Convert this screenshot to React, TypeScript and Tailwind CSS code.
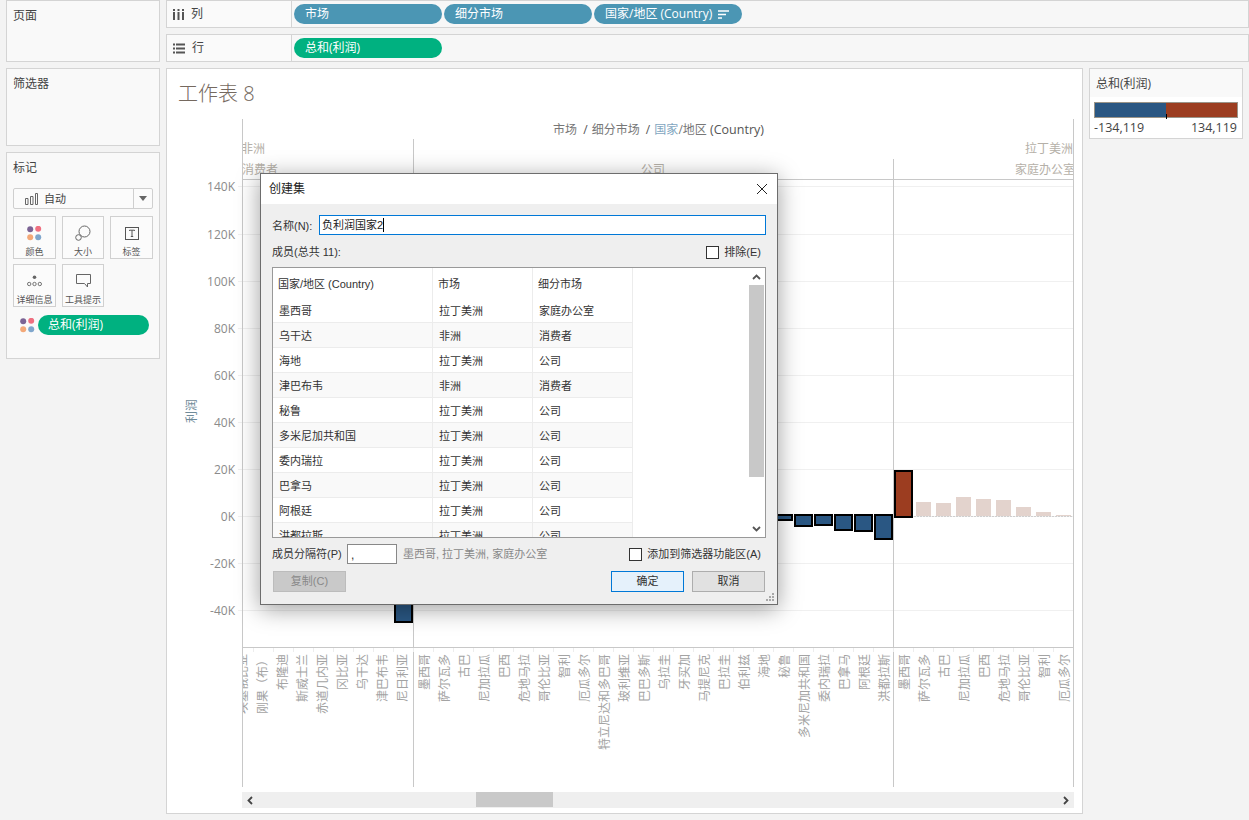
import { ReactNode } from "react";

// Country labels per pane, left to right
const AFRICA = ["埃塞俄比亚", "刚果（布）", "布隆迪", "斯威士兰", "赤道几内亚", "冈比亚", "乌干达", "津巴布韦", "尼日利亚"];
const CORP = ["墨西哥", "萨尔瓦多", "古巴", "尼加拉瓜", "巴西", "危地马拉", "哥伦比亚", "智利", "厄瓜多尔", "特立尼达和多巴哥", "玻利维亚", "巴巴多斯", "乌拉圭", "牙买加", "马提尼克", "巴拉圭", "伯利兹", "海地", "秘鲁", "多米尼加共和国", "委内瑞拉", "巴拿马", "阿根廷", "洪都拉斯"];
const HOME = ["墨西哥", "萨尔瓦多", "古巴", "尼加拉瓜", "巴西", "危地马拉", "哥伦比亚", "智利", "厄瓜多尔"];

const TICKS = [
  { y: 186, label: "140K" },
  { y: 234, label: "120K" },
  { y: 281, label: "100K" },
  { y: 328, label: "80K" },
  { y: 375, label: "60K" },
  { y: 422, label: "40K" },
  { y: 469, label: "20K" },
  { y: 516, label: "0K" },
  { y: 563, label: "-20K" },
  { y: 610, label: "-40K" },
];

// Selected bars: x, top, bottom
const SELECTED_NEG = [
  [395, 515, 622],
  [775, 515, 520],
  [795, 515, 526],
  [815, 515, 525],
  [835, 515, 530],
  [855, 515, 531],
  [875, 515, 539],
];
const FADED_TOPS = [502, 503, 497, 499, 500, 507, 512, 515];

const MEMBERS = [
  ["墨西哥", "拉丁美洲", "家庭办公室"],
  ["乌干达", "非洲", "消费者"],
  ["海地", "拉丁美洲", "公司"],
  ["津巴布韦", "非洲", "消费者"],
  ["秘鲁", "拉丁美洲", "公司"],
  ["多米尼加共和国", "拉丁美洲", "公司"],
  ["委内瑞拉", "拉丁美洲", "公司"],
  ["巴拿马", "拉丁美洲", "公司"],
  ["阿根廷", "拉丁美洲", "公司"],
  ["洪都拉斯", "拉丁美洲", "公司"],
];

function Dots() {
  return (
    <svg width="15" height="15" viewBox="0 0 15 15">
      <circle cx="3.2" cy="3.2" r="3" fill="#7b6394" />
      <circle cx="11.2" cy="2.8" r="3" fill="#ef6f80" />
      <circle cx="3.2" cy="11.2" r="3" fill="#f3a878" />
      <circle cx="11.2" cy="11.2" r="3" fill="#7fa6cc" />
    </svg>
  );
}

function Pill({ color, children }: { color: string; children: ReactNode }) {
  return <div className={`h-5 w-[148px] rounded-full flex items-center pl-[11px] text-white text-xs ${color}`}>{children}</div>;
}

function Shelf({ icon, label, children }: { icon: ReactNode; label: string; children: ReactNode }) {
  return (
    <div className="h-[28px] border border-[#d4d4d4] flex bg-[#f7f7f7]">
      <div className="w-[125px] flex items-center gap-[7px] pl-[6px] text-xs text-[#444] bg-[#fafafa] border-r border-[#d4d4d4]">
        {icon}
        <span>{label}</span>
      </div>
      <div className="flex items-center gap-[2px] pl-[2px]">{children}</div>
    </div>
  );
}

function MarkButton({ icon, label, narrow }: { icon: ReactNode; label: string; narrow?: boolean }) {
  return (
    <div className={`h-[43px] border border-[#d0d0d0] bg-[#fbfbfb] flex flex-col items-center pt-[6px] text-[9px] leading-[12px] text-[#555] ${narrow ? "w-[42px]" : "w-[43px]"}`}>
      <div className="h-[20px] flex items-center justify-center">{icon}</div>
      <span className="mt-[3px] whitespace-nowrap">{label}</span>
    </div>
  );
}

function Chart() {
  return (
    <svg viewBox="167 115 915 675" width="915" height="675" className="block">
      <defs>
        <clipPath id="pane">
          <rect x="243" y="115" width="830" height="675" />
        </clipPath>
      </defs>

      {/* grid lines */}
      {TICKS.map((t) => (
        <g key={t.y}>
          <line x1="238" x2="1073" y1={t.y + 0.5} y2={t.y + 0.5} stroke="#f0f0f0" />
          <text x="235" y={t.y + 5} textAnchor="end" fontSize="12" fill="#8b8b8b">
            {t.label}
          </text>
        </g>
      ))}

      {/* pane dividers */}
      <line x1="242.5" x2="242.5" y1="119" y2="787" stroke="#c8c8c8" />
      <line x1="413.5" x2="413.5" y1="139" y2="787" stroke="#c8c8c8" />
      <line x1="893.5" x2="893.5" y1="159" y2="787" stroke="#c8c8c8" />
      <line x1="1073.5" x2="1073.5" y1="119" y2="787" stroke="#c8c8c8" />
      <line x1="243" x2="1073" y1="179.5" y2="179.5" stroke="#c8c8c8" />
      <line x1="243" x2="1073" y1="647.5" y2="647.5" stroke="#c8c8c8" />

      {/* headers */}
      <text x="658.5" y="134" textAnchor="middle" fontSize="12" fill="#555">
        <tspan fill="#777">市场</tspan>
        <tspan dx="3"> / </tspan>
        <tspan dx="1" fill="#777">细分市场</tspan>
        <tspan dx="3"> / </tspan>
        <tspan dx="1" fill="#7fa6c0">国家</tspan>
        <tspan fill="#777">/地区</tspan>
        <tspan fontSize="12.5"> (Country)</tspan>
      </text>
      <g clipPath="url(#pane)" fontSize="12" fill="#b5b0a8">
        <text x="241" y="153">非洲</text>
        <text x="242" y="174">消费者</text>
        <text x="653" y="174" textAnchor="middle">公司</text>
        <text x="1073" y="153" textAnchor="end">拉丁美洲</text>
        <text x="1075" y="174" textAnchor="end">家庭办公室</text>
      </g>

      {/* axis title */}
      <text transform="translate(196 411) rotate(-90)" textAnchor="middle" fontSize="12" fill="#6f8b9a">
        利润
      </text>

      {/* ticks under the axis */}
      {Array.from({ length: 41 }, (_, i) => (
        <line key={i} x1={253.5 + i * 20} x2={253.5 + i * 20} y1="648" y2="652" stroke="#ededed" />
      ))}

      {/* country labels */}
      <g clipPath="url(#pane)" fontSize="12" fill="#a3a3a3">
        {AFRICA.map((n, i) => (
          <text key={n} transform={`translate(${247 + i * 20} 654) rotate(-90)`} textAnchor="end">
            {n}
          </text>
        ))}
        {CORP.map((n, i) => (
          <text key={n} transform={`translate(${429 + i * 20} 654) rotate(-90)`} textAnchor="end">
            {n}
          </text>
        ))}
        {HOME.map((n, i) => (
          <text key={n} transform={`translate(${909 + i * 20} 654) rotate(-90)`} textAnchor="end">
            {n}
          </text>
        ))}
      </g>

      {/* bars */}
      {SELECTED_NEG.map(([x, top, bottom]) => (
        <rect key={x} x={x} y={top} width="17" height={bottom - top} fill="#2a5783" stroke="#000" strokeWidth="2" />
      ))}
      <rect x="895" y="471" width="17" height="46" fill="#9c3d20" stroke="#000" strokeWidth="2" />
      {FADED_TOPS.map((top, i) => (
        <rect key={i} x={916 + i * 20} y={top} width="15" height={516 - top} fill="#e3d3cd" />
      ))}
      <line x1="914" x2="1072" y1="516.5" y2="516.5" stroke="#cfcfcf" strokeDasharray="2 1" />
    </svg>
  );
}

function Dialog() {
  return (
    <div className="absolute left-[260px] top-[173px] w-[518px] h-[432px] bg-[#efefef] border border-[#6d6d6d] shadow-[0_4px_22px_rgba(0,0,0,0.38)] flex flex-col text-[11px] text-[#333] [font-family:'Liberation_Sans','Noto_Sans_CJK_SC',sans-serif]">
      <div className="h-[30px] shrink-0 bg-white flex items-center justify-between pl-[8px] pr-[9px] text-xs text-[#222]">
        <span>创建集</span>
        <svg width="12" height="12" viewBox="0 0 12 12" stroke="#222" strokeWidth="1">
          <path d="M1 1l10 10M11 1L1 11" />
        </svg>
      </div>

      <div className="flex-1 flex flex-col px-[11px] relative">
        <div className="flex items-center mt-[11px]">
          <span className="whitespace-nowrap pt-[2px]">名称(N):</span>
          <div className="ml-auto h-[20px] w-[447px] border border-[#0078d7] bg-white flex items-center pl-[2px] text-[11px] text-[#222]">
            负利润国家2<span className="w-px h-[14px] bg-black" />
          </div>
        </div>
        <div className="flex items-center justify-between mt-[10px] h-[14px] pr-[5px]">
          <span>成员(总共 11):</span>
          <div className="flex items-center gap-[5px]">
            <span className="w-[13px] h-[13px] border border-[#333] bg-white" />
            <span>排除(E)</span>
          </div>
        </div>

        <div className="mt-[8px] w-[494px] h-[271px] border border-[#999] bg-white flex overflow-hidden">
          <div className="w-[360px] shrink-0">
            <div className="flex h-[30px] items-center">
              <div className="w-[160px] h-full flex items-center pl-[5px] pt-[2px] border-r border-[#ececec]">国家/地区 (Country)</div>
              <div className="w-[100px] h-full flex items-center pl-[5px] pt-[2px] border-r border-[#ececec]">市场</div>
              <div className="w-[100px] h-full flex items-center pl-[5px] pt-[2px] border-r border-[#ececec]">细分市场</div>
            </div>
            {MEMBERS.map((m, i) => (
              <div key={m[0]} className={`flex h-[25px] items-center border-b border-[#ececec] ${i % 2 === 1 ? "bg-[#f9f9f9]" : "bg-white"}`}>
                <div className="w-[160px] h-full flex items-center pl-[6px] pt-[2px] border-r border-[#ececec]">{m[0]}</div>
                <div className="w-[100px] h-full flex items-center pl-[6px] pt-[2px] border-r border-[#ececec]">{m[1]}</div>
                <div className="w-[100px] h-full flex items-center pl-[6px] pt-[2px] border-r border-[#ececec]">{m[2]}</div>
              </div>
            ))}
          </div>
          <div className="flex-1" />
          <div className="w-[16px] flex flex-col bg-white items-start">
            <div className="w-[15px] h-[17px] flex items-center justify-center">
              <svg width="9" height="6" viewBox="0 0 9 6" fill="none" stroke="#555" strokeWidth="1.8">
                <path d="M1 5l3.5-3.5L8 5" />
              </svg>
            </div>
            <div className="w-[15px] h-[192px] bg-[#c8c8c8]" />
            <div className="flex-1" />
            <div className="w-[15px] h-[17px] flex items-center justify-center">
              <svg width="9" height="6" viewBox="0 0 9 6" fill="none" stroke="#555" strokeWidth="1.8">
                <path d="M1 1l3.5 3.5L8 1" />
              </svg>
            </div>
          </div>
        </div>

        <div className="flex items-center mt-[6px] h-[20px]">
          <span className="w-[75px] whitespace-nowrap">成员分隔符(P)</span>
          <div className="w-[50px] h-[20px] border border-[#888] bg-white pl-[3px] leading-[20px] text-xs">,</div>
          <span className="ml-[6px] text-[#888]">墨西哥, 拉丁美洲, 家庭办公室</span>
          <div className="ml-auto flex items-center gap-[5px] pr-[5px]">
            <span className="w-[13px] h-[13px] border border-[#333] bg-white" />
            <span>添加到筛选器功能区(A)</span>
          </div>
        </div>

        <div className="flex items-center mt-[7px] pl-px pr-[1px]">
          <div className="w-[73px] h-[21px] bg-[#c9c9c9] border border-[#bcbcbc] text-[#888] flex items-center justify-center">复制(C)</div>
          <div className="ml-auto w-[73px] h-[21px] bg-[#e5f1fb] border border-[#0078d7] flex items-center justify-center">确定</div>
          <div className="ml-[8px] w-[73px] h-[21px] bg-[#e1e1e1] border border-[#adadad] flex items-center justify-center">取消</div>
        </div>

        {/* resize grip */}
        <svg width="10" height="10" viewBox="0 0 10 10" fill="#a8a8a8" className="absolute right-[2px] bottom-[2px]">
          <rect x="7" y="1" width="2" height="2" />
          <rect x="4" y="4" width="2" height="2" />
          <rect x="7" y="4" width="2" height="2" />
          <rect x="1" y="7" width="2" height="2" />
          <rect x="4" y="7" width="2" height="2" />
          <rect x="7" y="7" width="2" height="2" />
        </svg>
      </div>
    </div>
  );
}

export default function App() {
  return (
    <div className="relative w-[1249px] h-[820px] overflow-hidden bg-[#f3f3f3] flex [font-family:'Open_Sans','Noto_Sans_CJK_SC',sans-serif]">
      {/* left cards */}
      <div className="w-[154px] ml-[6px] shrink-0 flex flex-col gap-[6px]">
        <div className="h-[62px] border border-[#d4d4d4] bg-[#f9f9f9] px-[6px] pt-[7px] text-xs text-[#444]">页面</div>
        <div className="h-[78px] border border-[#d4d4d4] bg-[#f9f9f9] px-[6px] pt-[7px] text-xs text-[#444]">筛选器</div>
        <div className="h-[207px] border border-[#d4d4d4] bg-[#f9f9f9] px-[6px] pt-[7px] text-xs text-[#444]">
          <div>标记</div>
          <div className="mt-[12px] h-[21px] w-[140px] border border-[#cfcfcf] rounded-[2px] bg-[#fbfbfb] flex items-center">
            <div className="flex-1 flex items-center gap-[6px] pl-[10px] pt-px text-[11px]">
              <svg width="14" height="12" viewBox="0 0 14 12" fill="none" stroke="#666">
                <path d="M1.5 5.5h2.5v6h-2.5zM6.5 3.5h2.5v8h-2.5zM11.5 .5h2v11h-2z" />
              </svg>
              自动
            </div>
            <div className="w-[19px] h-full border-l border-[#cfcfcf] flex items-center justify-center">
              <svg width="8" height="5" viewBox="0 0 8 5" fill="#666">
                <path d="M0 0h8L4 5z" />
              </svg>
            </div>
          </div>
          <div className="mt-[7px] flex flex-wrap gap-x-[6px] gap-y-[5px] w-[145px]">
            <MarkButton icon={<Dots />} label="颜色" />
            <MarkButton
              narrow
              label="大小"
              icon={
                <svg width="16" height="16" viewBox="0 0 16 16" fill="none" stroke="#666">
                  <circle cx="9.5" cy="6.5" r="5.5" fill="#fbfbfb" />
                  <circle cx="3.5" cy="12.5" r="2.8" fill="#fbfbfb" />
                </svg>
              }
            />
            <MarkButton
              label="标签"
              icon={
                <svg width="14" height="13" viewBox="0 0 14 13" fill="none" stroke="#555">
                  <rect x=".5" y=".5" width="13" height="12" />
                  <path d="M4.5 4v-.8h5V4M7 3.2v6.3M5.8 9.5h2.4" />
                </svg>
              }
            />
            <MarkButton
              label="详细信息"
              icon={
                <svg width="15" height="12" viewBox="0 0 15 12" fill="none" stroke="#666" strokeWidth=".9">
                  <circle cx="7.5" cy="2.2" r="1.8" fill="#666" stroke="none" />
                  <circle cx="2.2" cy="9" r="1.7" />
                  <circle cx="7.5" cy="9" r="1.7" />
                  <circle cx="12.8" cy="9" r="1.7" />
                </svg>
              }
            />
            <MarkButton
              narrow
              label="工具提示"
              icon={
                <svg width="15" height="14" viewBox="0 0 15 14" fill="none" stroke="#666">
                  <path d="M.5 .5h14v9h-3v3.5l-3-3.5h-8z" />
                </svg>
              }
            />
          </div>
          <div className="mt-[8px] ml-[7px] flex items-center gap-[3px]">
            <Dots />
            <div className="h-5 w-[111px] rounded-full bg-[#00b180] text-white flex items-center pl-[10px]">总和(利润)</div>
          </div>
        </div>
      </div>

      {/* right of the cards */}
      <div className="flex-1 ml-[6px] flex flex-col">
        <Shelf
          label="列"
          icon={
            <svg width="11" height="11" viewBox="0 0 11 11" fill="#555">
              <path d="M0 3h2v8H0zM0 0h2v2H0zM4.5 3h2v8h-2zM4.5 0h2v2h-2zM9 3h2v8H9zM9 0h2v2H9z" />
            </svg>
          }
        >
          <Pill color="bg-[#4b96b4]">市场</Pill>
          <Pill color="bg-[#4b96b4]">细分市场</Pill>
          <Pill color="bg-[#4b96b4]">
            国家/地区 (Country)
            <svg width="11" height="9" viewBox="0 0 11 9" fill="none" stroke="#fff" strokeWidth="1.6" className="ml-[6px]">
              <path d="M0 1h11M0 4.5h8M0 8h4" />
            </svg>
          </Pill>
        </Shelf>
        <div className="h-[6px]" />
        <Shelf
          label="行"
          icon={
            <svg width="12" height="11" viewBox="0 0 12 11" fill="#555">
              <path d="M0 .5h2v2H0zM3 .5h9v2H3zM0 4.5h2v2H0zM3 4.5h9v2H3zM0 8.5h2v2H0zM3 8.5h9v2H3z" />
            </svg>
          }
        >
          <Pill color="bg-[#00b180]">总和(利润)</Pill>
        </Shelf>

        <div className="mt-[6px] flex gap-[6px]">
          <div className="w-[917px] h-[746px] border border-[#d4d4d4] bg-white">
            <div className="h-[46px] pl-[11px] pt-[9px] text-xl leading-[32px] text-[#75695f] font-light">工作表 8</div>
            <Chart />
            <div className="ml-[75px] mt-[2px] w-[832px] h-[16px] bg-[#efefef] flex items-center justify-between px-[5px] relative">
              <svg width="6" height="9" viewBox="0 0 6 9" fill="none" stroke="#444" strokeWidth="1.8">
                <path d="M5 1L1.5 4.5 5 8" />
              </svg>
              <div className="absolute left-[234px] top-0 w-[77px] h-[15px] bg-[#c9c9c9]" />
              <svg width="6" height="9" viewBox="0 0 6 9" fill="none" stroke="#444" strokeWidth="1.8">
                <path d="M1 1l3.5 3.5L1 8" />
              </svg>
            </div>
          </div>

          {/* color legend */}
          <div className="w-[154px] h-[71px] border border-[#d4d4d4] bg-white text-xs text-[#444]">
            <div className="h-[28px] bg-[#f9f9f9] pl-[6px] pt-[2px] flex items-center">总和(利润)</div>
            <div className="mx-[4px] mt-[5px] h-[16px] border border-[#9a9488] flex relative">
              <div className="flex-1 bg-[#2a5783]" />
              <div className="flex-1 bg-[#9c3d20]" />
              <div className="absolute left-[71px] top-[11px] w-px h-[5px] bg-black" />
            </div>
            <div className="ml-[4px] mr-[5px] flex justify-between leading-[20px] text-[12.5px] text-[#444]">
              <span>-134,119</span>
              <span>134,119</span>
            </div>
          </div>
        </div>
      </div>

      <Dialog />
    </div>
  );
}
